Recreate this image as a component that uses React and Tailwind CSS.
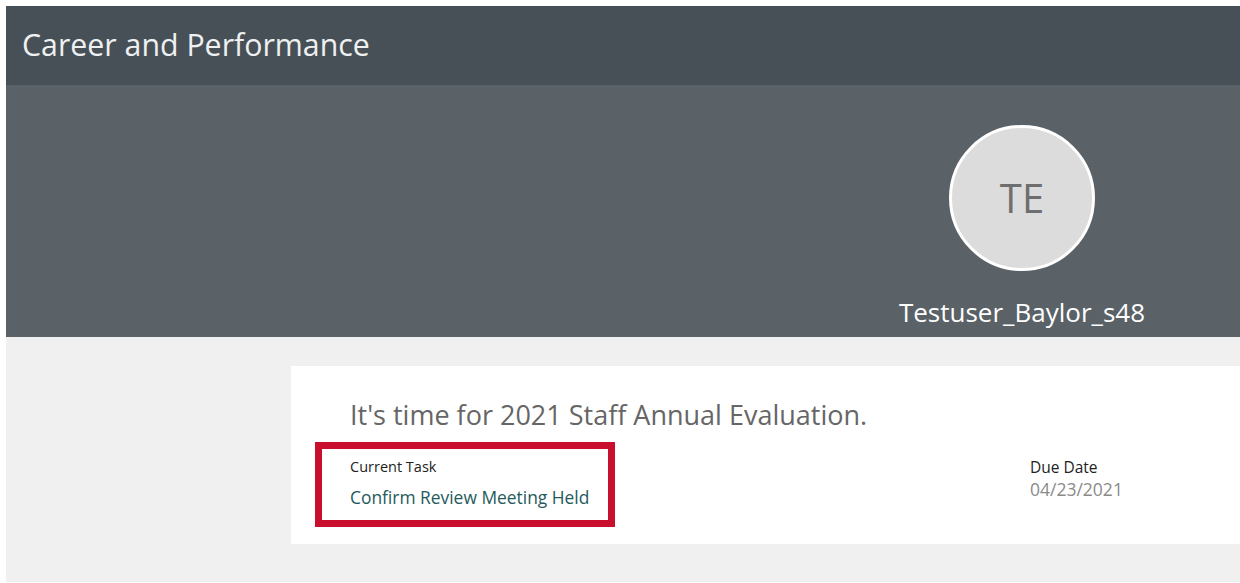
export default function App() {
  return (
    <div
      className="w-[1240px] h-[583px] bg-white pl-[6px] pt-[6px] pb-[1px] overflow-hidden"
      style={{ fontFamily: '"Open Sans", "Noto Sans", sans-serif' }}
    >
      <div className="flex flex-col h-full">
        {/* Page title bar */}
        <header className="h-[79px] bg-[#475056] flex items-center pl-[16px] pb-[1px] shrink-0">
          <h1 className="text-[30.3px] leading-none text-[#eef0f1] font-normal">
            Career and Performance
          </h1>
        </header>

        {/* Profile banner */}
        <section className="h-[252px] bg-[#5a6167] flex justify-end pr-[88px] pt-[40px] shrink-0">
          <div className="w-[260px] flex flex-col items-center">
            <div className="w-[146px] h-[146px] rounded-full border-[3px] border-white bg-[#dcdcdc] flex items-center justify-center">
              <span className="text-[40px] text-[#6e6e6e] leading-none">TE</span>
            </div>
            <div className="mt-[25px] text-[26px] leading-[32px] text-white">
              Testuser_Baylor_s48
            </div>
          </div>
        </section>

        {/* Task area */}
        <main className="flex-1 bg-[#f0f0f0] pt-[29px] pl-[285px]">
          <div className="bg-white h-[178px] pt-[33px]">
            <h2 className="pl-[59px] text-[27px] leading-[32px] text-[#666666] font-normal">
              It's time for 2021 Staff Annual Evaluation.
            </h2>
            <div className="flex items-start mt-[11px] pl-[24px]">
              <div className="w-[300px] border-[7px] border-[#c8102e] pl-[28px] pt-[8px] pb-[12px]">
                <div className="text-[14.5px] leading-[20px] text-[#222222]">Current Task</div>
                <div className="mt-[9px] text-[17.4px] leading-[22px] text-[#1f5a5c]">
                  Confirm Review Meeting Held
                </div>
              </div>
              <div className="ml-[415px] pt-[15px]">
                <div className="text-[15.5px] leading-[20px] text-[#222222]">Due Date</div>
                <div className="mt-[1px] text-[17.5px] leading-[22px] text-[#8a8a8a]">04/23/2021</div>
              </div>
            </div>
          </div>
        </main>
      </div>
    </div>
  );
}
